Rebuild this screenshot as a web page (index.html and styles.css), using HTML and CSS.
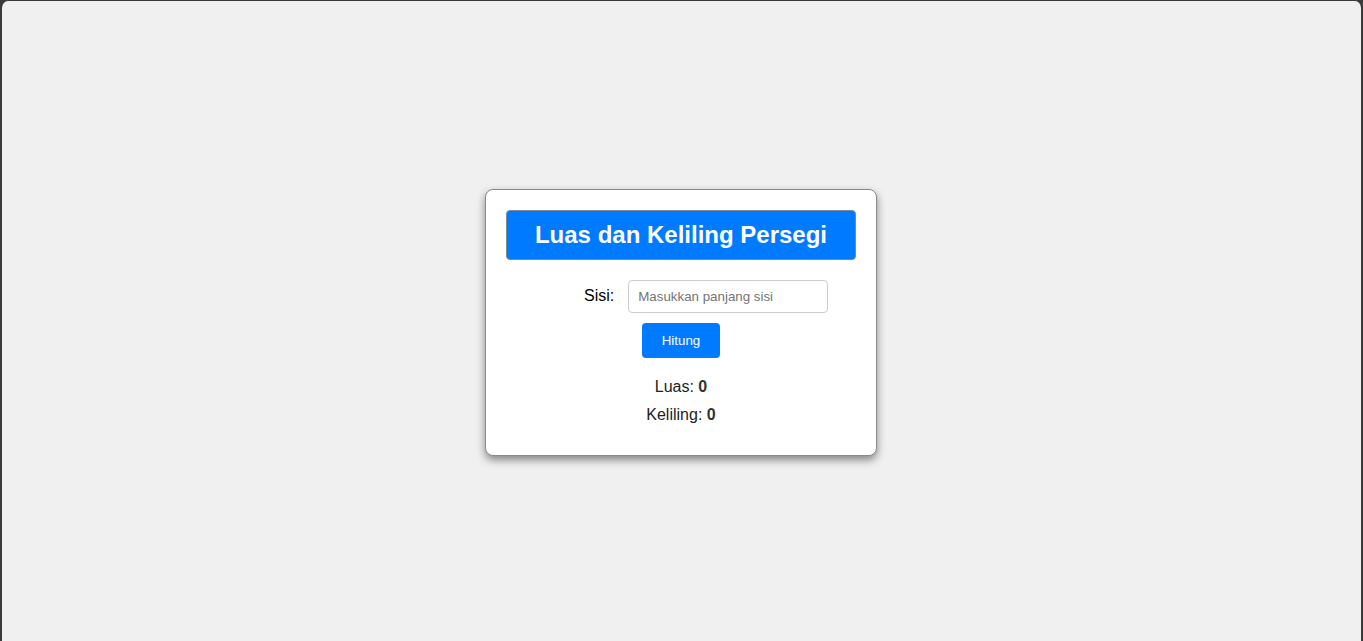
FILE: index.html
```html
<!DOCTYPE html>
<html lang="id">
<head>
<meta charset="utf-8">
<title>Luas dan Keliling Persegi</title>
<link rel="stylesheet" href="styles.css">
</head>
<body>
<div class="frame">
  <div class="card">
    <h2 class="title">Luas dan Keliling Persegi</h2>
    <div class="field">
      <label class="label" for="sisi">Sisi:</label>
      <input class="input" id="sisi" type="number" placeholder="Masukkan panjang sisi">
    </div>
    <button class="btn" type="button">Hitung</button>
    <div class="results">
      <p class="result">Luas: <b>0</b></p>
      <p class="result">Keliling: <b>0</b></p>
    </div>
  </div>
</div>
</body>
</html>
```

FILE: styles.css
```css
* { box-sizing: border-box; }
html, body { margin: 0; padding: 0; height: 100%; }
body {
  background: #3a3a3a;
  font-family: "Liberation Sans", Arial, sans-serif;
}
.frame {
  height: 641px;
  background: #f0f0f0;
  border-top: 1px solid #3a3a3a;
  border-left: 2px solid #3a3a3a;
  border-right: 2px solid #3a3a3a;
  border-radius: 8px 8px 0 0;
  display: flex;
  align-items: center;
  justify-content: center;
}
.card {
  width: 392px;
  background: #fff;
  border: 1px solid #8a8a8a;
  border-radius: 8px;
  padding: 20px;
  box-shadow: 0 4px 8px rgba(0,0,0,0.45);
  display: flex;
  flex-direction: column;
  align-items: center;
  margin-right: 1px;
  margin-top: 2px;
}
.title {
  width: 100%;
  margin: 0 0 20px;
  padding: 10px;
  background: #007bff;
  color: #fff;
  border: 1px solid #7a8a99;
  border-radius: 4px;
  font-size: 24px;
  font-weight: bold;
  line-height: 28px;
  text-align: center;
}
.field {
  width: 100%;
  display: flex;
  align-items: center;
  padding-left: 78px;
  gap: 14px;
}
.label {
  font-size: 16px;
  color: #000;
}
.input {
  width: 200px;
  height: 33px;
  padding: 8px 9px;
  border: 1px solid #ccc;
  border-radius: 4px;
  font-family: "Liberation Sans", Arial, sans-serif;
  font-size: 13.33px;
  color: #333;
  outline: none;
}
.input::placeholder { color: #757575; }
.btn {
  margin-top: 10px;
  height: 35px;
  padding: 0 20px;
  background: #007bff;
  color: #fff;
  border: none;
  border-radius: 4px;
  font-family: "Liberation Sans", Arial, sans-serif;
  font-size: 13.33px;
  font-weight: normal;
}
.results {
  margin-top: 20px;
  padding-bottom: 1px;
  text-align: center;
}
.result {
  margin: 10px 0;
  font-size: 16px;
  color: #222;
}
.results .result:first-child { margin-top: 0; }
.result b { color: #333; }
```
